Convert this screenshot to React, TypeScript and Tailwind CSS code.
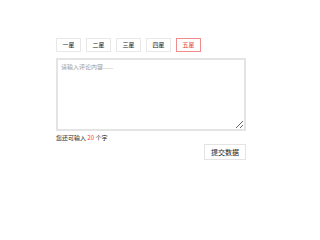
import React, { useState } from 'react';

const stars = ['一星', '二星', '三星', '四星', '五星'];

const App = () => {
  const [active, setActive] = useState(4);
  const [text, setText] = useState('');
  const left = 20 - text.length;

  return (
    <div className="w-[302px] h-[200px] bg-white" style={{ fontFamily: '"Noto Sans CJK SC", "Noto Sans", sans-serif' }}>
      <div className="pt-[38px] pl-[56px] w-[246px]">
        {/* star buttons */}
        <div className="flex gap-[5px]">
          {stars.map((s, i) => (
            <button
              key={s}
              onClick={() => setActive(i)}
              className={
                i === active
                  ? 'w-[25px] h-[14px] border border-[#f28b8b] text-[#e84343] text-[6px] leading-none bg-white'
                  : 'w-[25px] h-[14px] border border-[#e8e8e8] text-[#222] text-[6px] leading-none bg-white'
              }
            >
              {s}
            </button>
          ))}
        </div>

        {/* textarea */}
        <textarea
          value={text}
          onChange={(e) => setText(e.target.value.slice(0, 20))}
          placeholder="请输入评论内容......"
          className="block mt-[6px] w-[190px] h-[73px] border-2 border-[#e4e4e4] px-[3px] py-[2px] text-[6px] text-[#333] placeholder:text-[#999] outline-none"
        />

        <p className="mt-[2px] text-[6px] leading-[10px] text-[#222]">
          您还可输入 <span className="text-[#f33]">{left}</span> 个字
        </p>

        {/* submit */}
        <div className="flex justify-end mt-[1px]">
          <button className="w-[42px] h-[16px] border border-[#e4e4e4] text-[7px] leading-none text-[#222] bg-white">
            提交数据
          </button>
        </div>
      </div>
    </div>
  );
};

export default App;
